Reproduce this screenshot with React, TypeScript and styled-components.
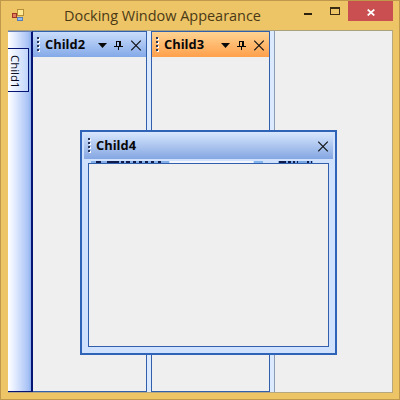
import React from "react";
import styled, { createGlobalStyle } from "styled-components";

const GlobalStyle = createGlobalStyle`
  * { box-sizing: border-box; }
  body { margin: 0; overflow: hidden; }
  svg { display: block; flex: none; }
`;

const Frame = styled.div`
  position: relative;
  width: 400px;
  height: 400px;
  background: #edc566;
  border: 1px solid #c0984b;
  display: flex;
  flex-direction: column;
  padding: 0 6px 6px 7px;
`;

const TitleBar = styled.header`
  height: 29px;
  flex: none;
  display: flex;
  align-items: flex-start;
  padding-left: 3px;
`;

const AppIcon = styled.svg`
  margin-top: 7px;
`;

const Title = styled.h1`
  margin: 6px 0 0 39px;
  width: 230px;
  font: 400 14.2px/18px "Open Sans", sans-serif;
  color: #4b3916;
  white-space: nowrap;
`;

const TitleText = styled.svg`
  overflow: visible;
  font: 400 14.5px "Open Sans", sans-serif;
  fill: #4b3916;
`;

const WindowButtons = styled.div`
  display: flex;
  margin-left: auto;
`;

const CloseButton = styled.button`
  width: 45px;
  height: 20px;
  border: 0;
  padding: 0 0 0 19px;
  display: flex;
  align-items: flex-start;
  background: #c94f50;

  svg {
    margin-top: 8px;
  }
`;

const Client = styled.main`
  width: 385px;
  height: 363px;
  flex: none;
  display: flex;
  background: #efefef;
  border-top: 1px solid #a9a17c;
  border-right: 1px solid #b7a77d;
  border-bottom: 1px solid #b7a77d;
`;

const HideStrip = styled.nav`
  width: 25px;
  padding-top: 16px;
  border-top: 1px solid #6781b8;
  border-right: 2px solid #061574;
  border-bottom: 1px solid #061574;
  background: linear-gradient(90deg, #fff 0%, #e9f0ff 24%, #a8c2f5 88%, #8bafed 100%);
`;

const SideTab = styled.div`
  width: 21px;
  height: 44px;
  border: 1px solid #061574;
  border-left: 0;
  background: linear-gradient(90deg, #fff, #c1d5fb);
  writing-mode: vertical-rl;
  font: 11.4px/14px "Open Sans", sans-serif;
  color: #080b1d;
  padding: 6px 6px 0 0;
  white-space: nowrap;
`;

const DockPanel = styled.section<{ $width: number; $left?: boolean }>`
  width: ${(p) => p.$width}px;
  border: 1px solid #315fab;
  border-left-width: ${(p) => (p.$left ? 1 : 0)}px;
  background: #efefef;
`;

const Splitter = styled.div<{ $end?: boolean }>`
  width: ${(p) => (p.$end ? 5 : 4)}px;
  background: #dceaff;
  border-right: ${(p) => (p.$end ? "1px solid #8f9db2" : "0")};
`;

const Caption = styled.div<{ $tone: "blue" | "orange" | "floating" }>`
  height: ${(p) => (p.$tone === "floating" ? 27 : 25)}px;
  display: flex;
  align-items: center;
  padding: 0 4px;
  background: ${(p) =>
    p.$tone === "orange"
      ? "linear-gradient(#ffd391, #ffa04c)"
      : p.$tone === "blue"
        ? "linear-gradient(#c9ddfb, #84a9e8)"
        : "linear-gradient(#d8e7fd, #84a6e2)"};
`;

const CaptionText = styled.svg`
  margin-left: 5px;
  overflow: visible;
  font: 700 12px "Open Sans", sans-serif;
  fill: #080808;
`;

const Tools = styled.div`
  display: flex;
  align-items: center;
  margin-left: auto;
  padding-top: 1px;
`;

const Floating = styled.section`
  position: absolute;
  left: 79px;
  top: 129px;
  width: 257px;
  height: 225px;
  border: 2px solid #2f63b7;
  padding: 0 2px;
  background: #cfe1fc;
`;

const FloatingBody = styled.div`
  width: 241px;
  height: 184px;
  margin-left: 4px;
  border: 1px solid #315fab;
  background: #efefef;
`;

const Residue = styled.svg`
  margin-left: 4px;
`;

const Grip = () => (
  <svg width="3" height="15" shapeRendering="crispEdges">
    {[0, 4, 8, 12].map((y) => (
      <React.Fragment key={y}>
        <rect x="1" y={y + 1} width="2" height="2" fill="#fff" />
        <rect x="0" y={y} width="2" height="2" fill="#29375c" />
      </React.Fragment>
    ))}
  </svg>
);

const CloseIcon = () => (
  <svg width="11" height="11">
    <path d="M.2.7 9.8 10.3M9.8.7.2 10.3" stroke="#111" strokeWidth="1.15" fill="none" />
  </svg>
);

const MenuAndPin = () => (
  <svg width="33" height="11">
    <path d="M0 3h9L4.5 8Z" fill="#080808" />
    <path
      d="M18.5 1v5M18 1.5h5M22 1v5M21 1v5M16 6.5h9M20.5 7v3"
      stroke="#080808"
      fill="none"
      shapeRendering="crispEdges"
    />
  </svg>
);

interface CaptionBarProps {
  text: string;
  tone: "blue" | "orange" | "floating";
}

const CaptionBar = ({ text, tone }: CaptionBarProps) => (
  <Caption $tone={tone}>
    <Grip />
    <CaptionText width="41" height="16">
      <text x="0" y="12" textLength="40" lengthAdjust="spacingAndGlyphs">{text}</text>
    </CaptionText>
    <Tools>
      {tone !== "floating" && <MenuAndPin />}
      <CloseIcon />
    </Tools>
  </Caption>
);

const marks = [
  [8, 5], [19, 12], [33, 3], [38, 4], [45, 3], [51, 3], [57, 3], [63, 3], [70, 3],
  [191, 7], [200, 3], [205, 2], [209, 1], [219, 2], [223, 1],
];

export default function App() {
  return (
    <>
      <GlobalStyle />
      <Frame>
        <TitleBar>
          <AppIcon width="14" height="14" viewBox="0 0 14 14">
            <rect x="1.5" y="5.5" width="4" height="4" fill="#e37c5c" stroke="#9d3529" />
            <rect x="6.5" y="1.5" width="6" height="6" fill="#ffe993" stroke="#b58d36" />
            <rect x="6.5" y="9.5" width="5" height="3" fill="#8fbdf0" stroke="#557fb5" />
          </AppIcon>
          <Title>
            <TitleText width="198" height="20">
              <text x="0" y="14" textLength="197" lengthAdjust="spacingAndGlyphs">Docking Window Appearance</text>
            </TitleText>
          </Title>
          <WindowButtons>
            <svg width="44" height="20" shapeRendering="crispEdges">
              <rect x="0" y="12" width="8" height="2" fill="#2c200e" />
              <path d="M26 6h10v8H26ZM27 8v5h8V8Z" fill="#3b2d13" fillRule="evenodd" />
            </svg>
            <CloseButton aria-label="Close">
              <svg width="8" height="7">
                <path d="M.7.5 7.3 6.5M7.3.5.7 6.5" stroke="#fff" strokeWidth="1.7" />
              </svg>
            </CloseButton>
          </WindowButtons>
        </TitleBar>
        <Client>
          <HideStrip>
            <SideTab>Child1</SideTab>
          </HideStrip>
          <DockPanel $width={114}>
            <CaptionBar text="Child2" tone="blue" />
          </DockPanel>
          <Splitter />
          <DockPanel $width={119} $left>
            <CaptionBar text="Child3" tone="orange" />
          </DockPanel>
          <Splitter $end />
        </Client>
        <Floating>
          <CaptionBar text="Child4" tone="floating" />
          <Residue width="241" height="4" shapeRendering="crispEdges">
            <rect y="2" x="82" width="83" height="2" fill="#f3f7fd" />
            <rect y="2" x="3" width="78" height="2" fill="#83aee7" />
            <rect y="2" x="166" width="9" height="2" fill="#83b4ed" />
            <rect y="2" x="190" width="35" height="2" fill="#79a7e5" />
            {marks.map(([x, w]) => (
              <rect key={x} x={x} y="2" width={w} height="2" fill="#101c4b" />
            ))}
          </Residue>
          <FloatingBody />
        </Floating>
      </Frame>
    </>
  );
}
